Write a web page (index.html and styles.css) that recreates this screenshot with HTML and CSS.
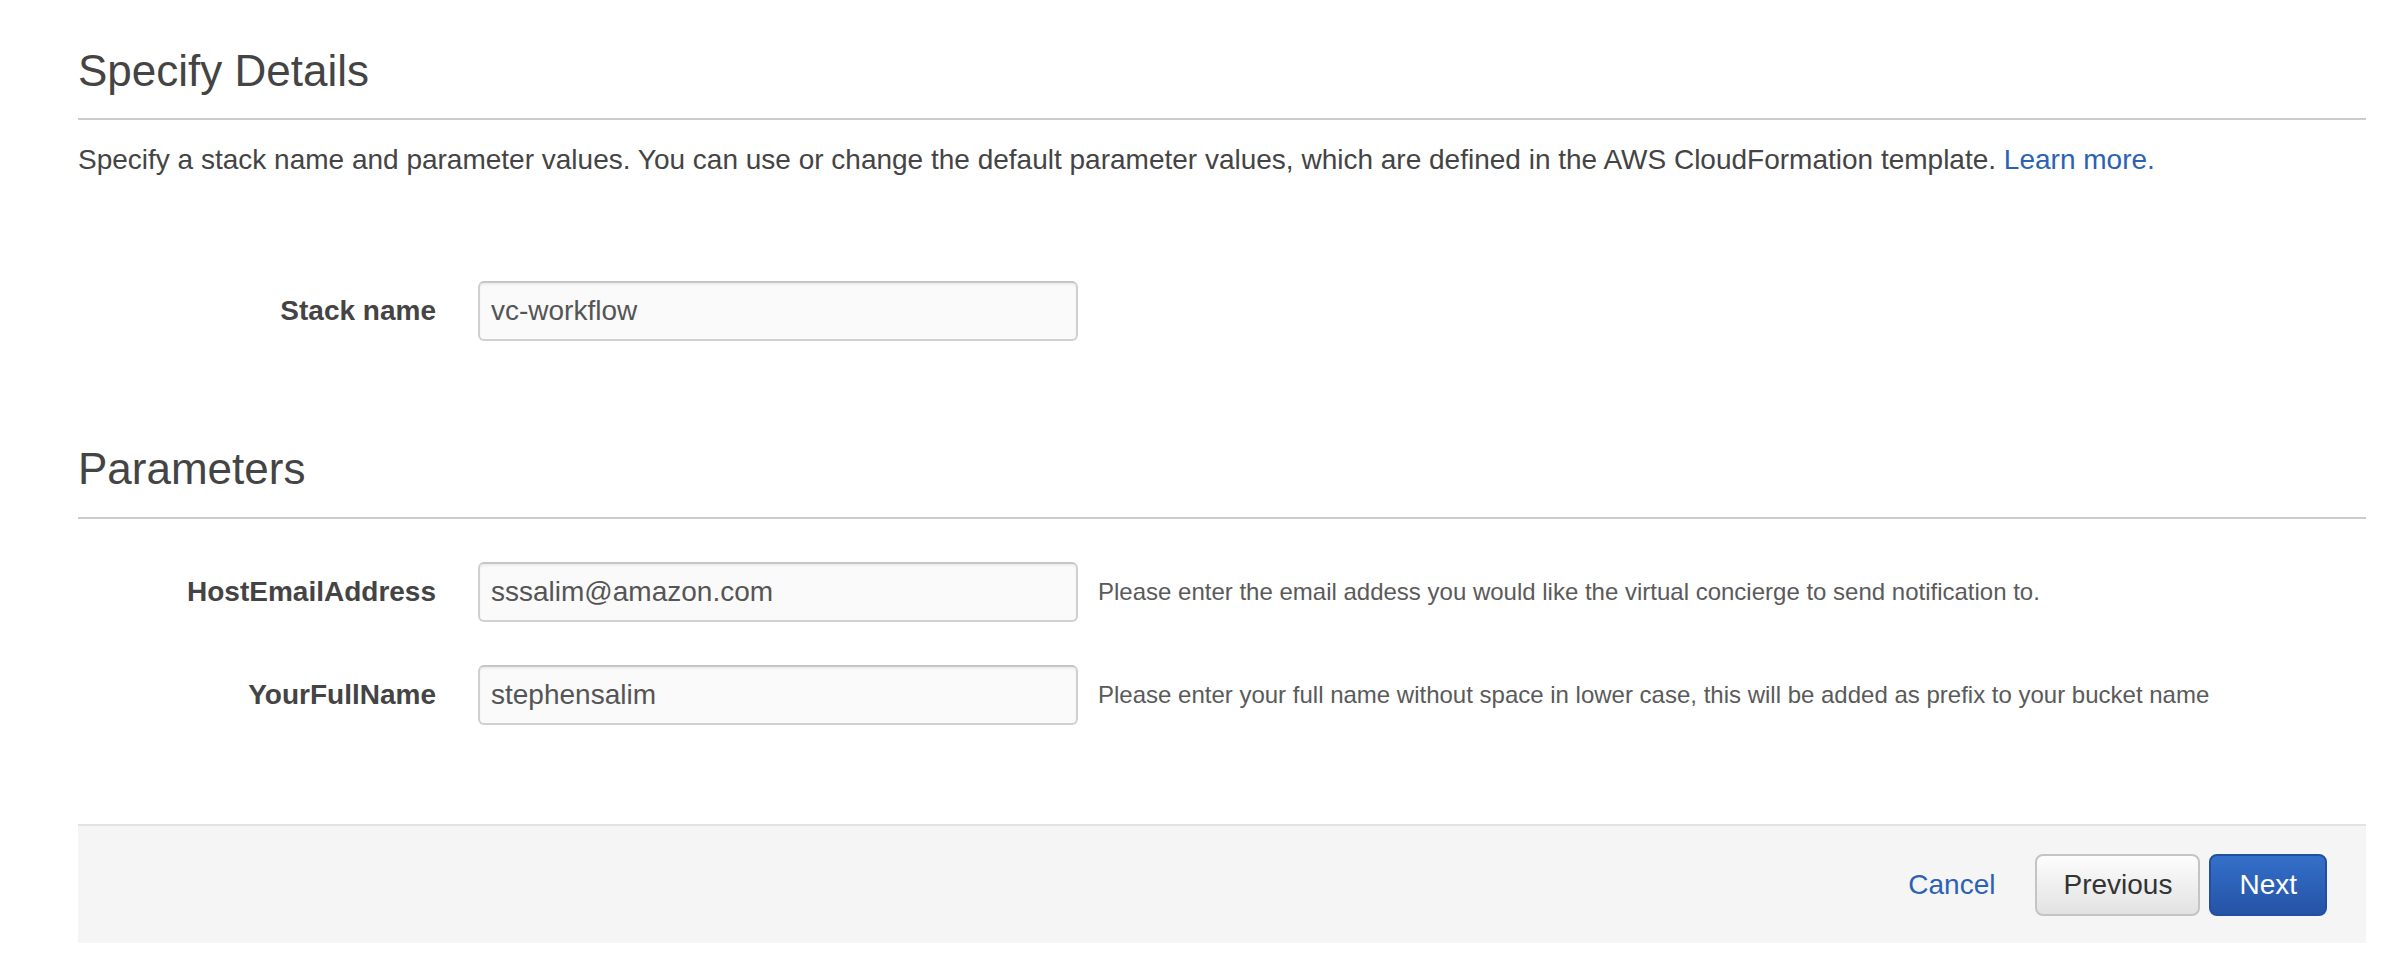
FILE: index.html
```html
<!DOCTYPE html>
<html lang="en">
<head>
<meta charset="utf-8">
<title>Specify Details</title>
<link rel="stylesheet" href="styles.css">
</head>
<body>
<div class="page">
  <h2 class="section-title first">Specify Details</h2>
  <p class="intro">Specify a stack name and parameter values. You can use or change the default parameter values, which are defined in the AWS CloudFormation template. <a class="link" href="#">Learn more.</a></p>

  <div class="form-row stack-row">
    <label class="field-label" for="stackname">Stack name</label>
    <input class="text-input" id="stackname" type="text" value="vc-workflow">
  </div>

  <h2 class="section-title params">Parameters</h2>

  <div class="form-row param-row">
    <label class="field-label" for="hostemail">HostEmailAddress</label>
    <input class="text-input" id="hostemail" type="text" value="sssalim@amazon.com">
    <span class="field-desc">Please enter the email addess you would like the virtual concierge to send notification to.</span>
  </div>

  <div class="form-row param-row">
    <label class="field-label" for="fullname">YourFullName</label>
    <input class="text-input" id="fullname" type="text" value="stephensalim">
    <span class="field-desc">Please enter your full name without space in lower case, this will be added as prefix to your bucket name</span>
  </div>

  <div class="footer">
    <a class="link cancel" href="#">Cancel</a>
    <button class="btn btn-secondary" type="button">Previous</button>
    <button class="btn btn-primary" type="button">Next</button>
  </div>
</div>
</body>
</html>
```

FILE: styles.css
```css
html, body {
  margin: 0;
  padding: 0;
  background: #ffffff;
}

body {
  font-family: "Liberation Sans", Arial, Helvetica, sans-serif;
  color: #444444;
}

.page {
  padding: 0 18px 0 78px;
}

.section-title {
  margin: 0;
  font-size: 44px;
  line-height: 52px;
  font-weight: normal;
  color: #444444;
  padding-bottom: 21px;
  border-bottom: 2px solid #cccccc;
}

.section-title.first {
  padding-top: 45px;
}

.section-title.params {
  margin-top: 102px;
  padding-bottom: 22px;
}

.intro {
  margin: 20px 0 0 0;
  font-size: 28px;
  line-height: 40px;
  color: #444444;
}

.link {
  color: #2b62b6;
  text-decoration: none;
}

.form-row {
  display: flex;
  align-items: center;
}

.stack-row {
  margin-top: 101px;
}

.param-row {
  margin-top: 43px;
}

.field-label {
  width: 358px;
  flex: none;
  margin-right: 42px;
  text-align: right;
  font-size: 28px;
  line-height: 40px;
  font-weight: bold;
  color: #444444;
}

.text-input {
  box-sizing: border-box;
  width: 600px;
  height: 60px;
  flex: none;
  margin: 0;
  padding: 0 12px 0 11px;
  font-family: "Liberation Sans", Arial, Helvetica, sans-serif;
  font-size: 28px;
  color: #555555;
  background: #fafafa;
  border: 2px solid #d0d0d0;
  border-top-color: #c6c6c6;
  border-radius: 6px;
  box-shadow: inset 0 2px 2px rgba(0, 0, 0, 0.05);
  outline: none;
}

.field-desc {
  margin-left: 20px;
  font-size: 24px;
  line-height: 32px;
  color: #5a5a5a;
  white-space: nowrap;
}

.footer {
  margin-top: 99px;
  box-sizing: border-box;
  height: 119px;
  background: #f5f5f5;
  border-top: 2px solid #e2e2e2;
  display: flex;
  align-items: center;
  justify-content: flex-end;
  padding: 0 39px 0 0;
}

.cancel {
  font-size: 28px;
  line-height: 40px;
  margin-right: 40px;
}

.btn {
  box-sizing: border-box;
  height: 62px;
  margin: 0;
  font-family: "Liberation Sans", Arial, Helvetica, sans-serif;
  font-size: 28px;
  line-height: 1;
  border-radius: 8px;
  cursor: pointer;
}

.btn-secondary {
  padding: 0 26px;
  color: #333333;
  background: linear-gradient(#fdfdfd, #e2e2e2);
  border: 2px solid #c4c4c4;
}

.btn-primary {
  margin-left: 9px;
  padding: 0 28px;
  color: #ffffff;
  background: linear-gradient(#3470c9, #2553a6);
  border: 2px solid #21509f;
}
```
